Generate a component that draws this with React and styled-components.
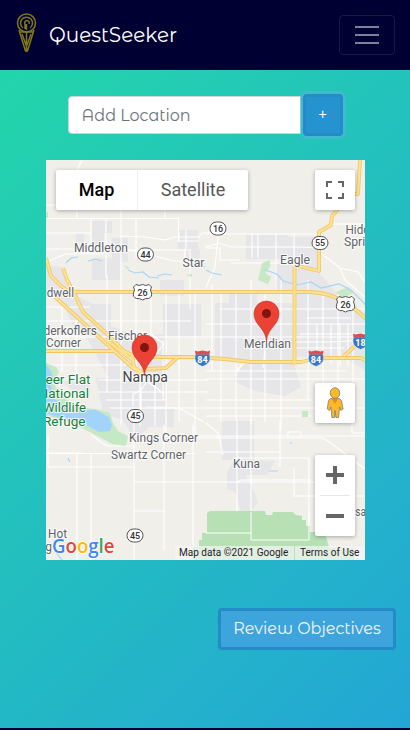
import React from 'react';
import styled, { createGlobalStyle } from 'styled-components';

const GlobalStyle = createGlobalStyle`
  * { box-sizing: border-box; }
  html, body { margin: 0; padding: 0; }
  body { background: #003; overflow: hidden; font-family: 'Montserrat Alternates', Montserrat, Lato, sans-serif; }
  button, input { font: inherit; }
`;

const Page = styled.div`
  height: 730px;
  display: flex;
  flex-direction: column;
  background: #003;
`;

const Navbar = styled.header`
  height: 70px;
  flex: none;
  display: flex;
  align-items: center;
  justify-content: space-between;
  padding: 0 15px 0 16px;
  background: #003;
`;

const Brand = styled.a`
  display: flex;
  align-items: center;
  gap: 12px;
  color: #fff;
  font-size: 20px;
  line-height: 30px;
`;

const Emblem = styled.svg`
  width: 21px;
  height: 44px;
  margin-bottom: 4px;
`;

const Toggler = styled.button`
  width: 56px;
  height: 40px;
  padding: 0;
  display: flex;
  flex-direction: column;
  justify-content: center;
  align-items: center;
  gap: 6px;
  background: transparent;
  border: 1px solid rgba(255, 255, 255, 0.1);
  border-radius: 4px;
`;

const TogglerBar = styled.span`
  width: 24px;
  height: 2px;
  background: rgba(255, 255, 255, 0.5);
`;

const Main = styled.main`
  height: 658px;
  flex: none;
  display: flex;
  flex-direction: column;
  align-items: center;
  padding-top: 24px;
  background: linear-gradient(135deg, #23d5ab, #23a6d5);
`;

const SearchRow = styled.form`
  display: flex;
  align-items: center;
  gap: 2px;
  height: 42px;
  width: 275px;
  margin-bottom: 24px;
`;

const Field = styled.input`
  width: 233px;
  height: 38px;
  padding: 6px 13px;
  font-size: 16px;
  line-height: 24px;
  background: #fff;
  border: 1px solid #ced4da;
  border-radius: 4px 0 0 4px;
  &::placeholder {
    color: #6c757d;
    opacity: 1;
  }
`;

const Button = styled.button`
  height: 42px;
  width: ${(p) => p.$width}px;
  padding: 0;
  display: flex;
  align-items: center;
  justify-content: center;
  font-size: 16px;
  line-height: 24px;
  white-space: nowrap;
  color: ${(p) => (p.$focused ? '#fff' : '#f1f6fb')};
  background: ${(p) => (p.$focused ? '#2593cf' : '#3da4dc')};
  border: 3px solid #238bc5;
  border-radius: 4px;
  box-shadow: ${(p) => (p.$focused ? '0 0 0 3px rgba(90, 178, 225, 0.5)' : 'none')};
`;

const ReviewRow = styled.div`
  align-self: stretch;
  display: flex;
  justify-content: flex-end;
  padding: 48px 14px 0 0;
`;

const MapFrame = styled.section`
  position: relative;
  width: 319px;
  height: 400px;
  flex: none;
  overflow: hidden;
  font-family: Roboto, sans-serif;
`;

const MapDrawing = styled.svg`
  display: block;
  width: 319px;
  height: 400px;
`;

const Control = styled.div`
  position: absolute;
  background: #fff;
  border-radius: 2px;
  box-shadow: 0 1px 4px rgba(0, 0, 0, 0.3);
  display: flex;
  align-items: center;
  justify-content: center;
`;

const MapTypes = styled(Control)`
  left: 10px;
  top: 10px;
  width: 192px;
  height: 40px;
`;

const MapType = styled.span`
  width: ${(p) => p.$width}px;
  padding-left: 1px;
  line-height: 40px;
  text-align: center;
  font-size: 18px;
  font-weight: ${(p) => (p.$active ? 500 : 400)};
  color: ${(p) => (p.$active ? '#000' : '#565656')};
  border-left: ${(p) => (p.$active ? 'none' : '1px solid #eee')};
`;

const SideControl = styled(Control)`
  right: 10px;
  top: ${(p) => p.$top}px;
  width: 40px;
  height: 40px;
`;

const ZoomControl = styled(SideControl)`
  height: 81px;
  flex-direction: column;
`;

const ZoomCell = styled.div`
  width: 40px;
  height: 40px;
  display: flex;
  align-items: center;
  justify-content: center;
`;

const ZoomRule = styled.div`
  width: 30px;
  height: 1px;
  background: #e6e6e6;
`;

const Credits = styled.div`
  position: absolute;
  right: 0;
  bottom: 0;
  height: 14px;
  display: flex;
`;

const Credit = styled.span`
  width: ${(p) => p.$width}px;
  padding-left: ${(p) => p.$inset}px;
  font-size: 10px;
  line-height: 14px;
  letter-spacing: 0.02px;
  white-space: nowrap;
  color: #222;
  background: rgba(245, 245, 245, 0.7);
  margin-left: 1px;
`;

const urbanAreas = [
  'M92 221h20v12h-8v14h-12z M76 233h8v9h-8z M112 238h16v24h-16z M92 258h28v22H92z',
  'M46 265l15 2 12 27 20 10h18v22l25 10 30-2v46l-30 8-22-4-10-14-16-30-16-16-10-24-16-8z',
  'M160 280h24v16h-24z M163 304h38v32h-38z M178 230h20v19h-20z M186 249h14v9h-14z',
  'M246 235h42v24h-42z M288 237h31v29h-31z M275 262h42v30h-42z M295 277l24-4 16 18 30 22v58l-20-14h-50z',
  'M215 303h78v58h-78z M229 293h28v12h-28z M298 294h36l31 26v35h-67z M245 361h48l8 26-16 9-30-5-22-10z',
  'M62 381h28v15h-12z M96 378h70v28h-20l4 20-15 14-12-20-20-6z M145 409h29v18h-29z',
  'M222 421h32v39h-32z M235 459l40 2-8 14h-22l10 18 3 10-8 9h-9l-6-20-8-3v-17z',
];

const minorRoads = [
  'M46 205h31v13M77 213v5M82 160l-5 10M46 218.5h132.500V242M91 218v30M91 233H46M106 218v60M121 210v130M136 218v40M77 210v8M46 249h45M46 262l20-8h38M121 236l24 1 20 3 10-3h24l3-4h18',
  'M104 248l30 3 40 10h10l2-15v-16M179 233v8h20M190 249v60M165 210v8M121 250h68M46 307h44M46 321h145M46 337h319M62 302v70M76 320v60M107 275v117M121 289v136M136 292v80M151 292v60M166 292v140M179 292v130M195 292v150M46 365h80M98 380h110M98 392h110M120 436h245M46 453.500h150M110 408h255',
  'M218 237v-8M206 247l13-4 12 4h67l25 1M218 237l-3 30-9 20M206 234h113M231 263h62l13 2M252 234v24M258 234v24M276 234v58M294 234v31M206 248h14v12h20M219 309h146M206 324h159M206 371h140M206 379h160M206 400h105M206 416h105M212 284v86M221 292v130M236 292v128M251 280v145M265 292v130M281 280v150M308 280v120M323 292v108M338 294v108M353 302v80M331 224h34M319 252l11 8 10 8 18 4 7 10M340 268l5 12 20 17',
  'M296 342h34l35-2M300 334h65M317 324v42M331 324v40M340 324v42M348 324v42M307 318h44M296 348h48M265 350l-2 18M240 370h-3l8-8M151 334l13 10-8 10',
  'M48 435v32h86M48 453h34M77 453v112M77 465v100h57M91 453v112M134 420v140M164 425v126M134 482h215M134 511h30M193 425v120M193 438h130l9 6 33 25M237 420v120M251 420v127M251 540h58v-82h-75M294 467v29h71M309 460v80M288 438v-6h13v6M280 420v47M251 438h42M206 452h74M206 423l12 10 5 22M352 420v13h13M206 533h45M237 482l4-2h70',
  'M137 370l4 19M148 380l-7 10-8 4v12M141 390v20M155 380v46M106 400h60M146 381l12 8 6 6M155 408h24l25 14M163 340v60M140 376v50M91 435l16 11h28',
];

const highways = [
  'M46 258l5 18 9 9 17 13M63 268l4 12 9 17 7 15 23 21 18 18 10 5 25 1h37l28 2 27 3h50l17-4h43l27 15',
  'M55 297l78 71 9 6M132 355l2 12 9 6M146 369l20-1 12-11M105 339l29 22',
  'M70 292h239c20 0 40 10 57 27M46 351h67M294.500 267v98M294 265l25 6v-39l12-7 1-9 6-7 8-15h12l2-34M344 356l12-11',
];

const labels = [
  { t: 'Middleton', x: 74, y: 252, w: 54 },
  { t: 'Star', x: 182.500, y: 267, w: 22 },
  { t: 'Eagle', x: 280, y: 264, w: 30 },
  { t: 'Hidden', x: 345.500, y: 234, w: 37 },
  { t: 'Springs', x: 344, y: 246, w: 41 },
  { t: 'Caldwell', x: 30, y: 297, w: 44 },
  { t: 'Vanderkoflers', x: 23, y: 335, w: 74 },
  { t: 'Corner', x: 46, y: 347, w: 35 },
  { t: 'Fischer', x: 108, y: 340, w: 39 },
  { t: 'Nampa', x: 122.500, y: 382, w: 45.500, s: 14, c: '#444' },
  { t: 'Meridian', x: 244, y: 348, w: 47, s: 12 },
  { t: 'Deer Flat', x: 36.500, y: 384, w: 54, s: 13, c: '#188038' },
  { t: 'National', x: 38.500, y: 398, w: 50.500, s: 13, c: '#188038' },
  { t: 'Wildlife', x: 43, y: 412, w: 43, s: 13, c: '#188038' },
  { t: 'Refuge', x: 43, y: 426, w: 42.500, s: 13, c: '#188038' },
  { t: 'Kings Corner', x: 129, y: 442, w: 69 },
  { t: 'Swartz Corner', x: 111, y: 459, w: 75 },
  { t: 'Kuna', x: 233, y: 468, w: 27 },
  { t: 'Hot', x: 48, y: 538, w: 19 },
  { t: 'Spring', x: 18, y: 551, w: 34 },
  { t: 'Mesa', x: 341, y: 516, w: 25 },
];

const OvalShield = ({ x, y, n }) => (
  <g>
    <rect x={x - 8} y={y - 6.500} width="16" height="13" rx="6.500" fill="#fff" stroke="#555" strokeWidth="1" />
    <text x={x} y={y + 3.300} fontSize="9" fontWeight="500" textAnchor="middle" fill="#333">{n}</text>
  </g>
);

const UsShield = ({ x, y, n }) => (
  <g transform={`translate(${x} ${y})`}>
    <path d="M-6.500-7.500Q-3.500-5.500 0-7.500Q3.500-5.500 6.500-7.500L9-5Q7-2 9 1Q10 5 6 6.500Q3 6 0 8Q-3 6-6 6.500Q-10 5-9 1Q-7-2-9-5Z" fill="#fff" stroke="#555" />
    <text y="3.500" fontSize="9" fontWeight="500" textAnchor="middle" fill="#333">{n}</text>
  </g>
);

const Interstate = ({ x, y, n }) => (
  <g transform={`translate(${x} ${y})`}>
    <path d="M-7-4H7Q10 5 0 8.500Q-10 5-7-4Z" fill="#3976c5" stroke="#fff" strokeWidth=".5" />
    <path d="M-7.500-7.500L-5-6.500 0-7.500 5-6.500 7.500-7.500 7-3.500H-7Z" fill="#d94f4b" />
    <text y="4.500" fontSize="9" fontWeight="700" textAnchor="middle" fill="#fff">{n}</text>
  </g>
);

const Pin = ({ x, y }) => (
  <g transform={`translate(${x} ${y})`}>
    <path d="M0 0C-1-14-12.500-16-12.500-28A12.500 12.500 0 0 1 12.500-28C12.500-16 1-14 0 0Z" fill="#ea4335" stroke="#c5221f" strokeWidth=".5" />
    <circle cy="-28" r="4.500" fill="#811411" />
  </g>
);

const googleLetters = [['G', '#4285f4'], ['o', '#ea4335'], ['o', '#fbbc04'], ['g', '#4285f4'], ['l', '#34a853'], ['e', '#ea4335']];

const MapCanvas = () => (
  <MapDrawing viewBox="46 160 319 400" fontFamily="Roboto, sans-serif">
    <rect x="46" y="160" width="319" height="400" fill="#f0efea" />
    <g fill="#e6e6e8">{urbanAreas.map((d) => <path key={d} d={d} />)}</g>
    <g fill="none" stroke="#fff" strokeWidth="1.100">{minorRoads.map((d) => <path key={d} d={d} />)}</g>
    <g fill="#c5e8c5">
      <path d="M46 363l10 4 3 5-6 10 8 14 12 8 13 4 10 1 14 4 3 10 5 8 10 5-2 10-14-2-24-13-18-9-24-6z" />
      <path d="M46 212h2v6h-2z M262 263l8-3v7l-5 6 6 4-3 7-10-4z M124 265l6 3-3 1z M186 275l6-1v3z M302 411h6v6h-6z M336 292l12-5 5 6-10 5z" />
    </g>
    <path d="M207 552v-39l3-2h55l1 4h6l1-3h20l3 3 6 1v4h4v6h4v6h15l4 16h25v12H193v-13h6v-7h3v-7h5z" fill="#b7e1b5" />
    <path d="M251 512v28h58v-29M206 533h45" fill="none" stroke="#fff" />
    <path d="M46 365l5 6 2 7-2 10 4 11 12 9 14 2h15l13 7 3 8-2 6-11 1-17-9-20-4-16-6z" fill="#a2d4fb" />
    <g fill="none" stroke="#a8d5f5" strokeWidth="1.200">
      <path d="M66 263l5-5 7-1M88 261l8-2 6 2M128 270l7 3 8-1 6 5 10 1M157 276l8-2 7 1M195 265l10 2M206 270l6 3 10 2M265 270l12 4 6 7 14 4 14-3 10 6 18-4 12 6 12 12 8 10M55 551l7 9" />
      <path d="M68 458l2 4M269 471h9M291 442v2" />
    </g>
    <g fill="none" strokeLinejoin="round">
      {highways.map((d) => <path key={d} d={d} stroke="#f2c666" strokeWidth="3.800" />)}
      {highways.map((d) => <path key={d} d={d} stroke="#fde293" strokeWidth="2.200" />)}
    </g>
    <OvalShield x={218} y={228.500} n="16" />
    <OvalShield x={145.500} y={254.500} n="44" />
    <OvalShield x={320} y={243} n="55" />
    <OvalShield x={135.500} y={416} n="45" />
    <OvalShield x={135} y={535.500} n="45" />
    <UsShield x={142.500} y={292} n="26" />
    <UsShield x={345.500} y={304} n="26" />
    <Interstate x={202.500} y={358} n="84" />
    <Interstate x={316} y={358} n="84" />
    <Interstate x={360.500} y={341} n="18" />
    {labels.map(({ t, x, y, w, s = 12, c = '#5f6368' }) => (
      <text key={t} x={x} y={y} fontSize={s} fill={c} stroke="#fff" strokeWidth="2" strokeOpacity=".8" paintOrder="stroke" textLength={w} lengthAdjust="spacingAndGlyphs">{t}</text>
    ))}
    <Pin x={144.500} y={375.500} />
    <Pin x={266.500} y={341.500} />
    <text x="52" y="553" fontSize="19.500" fontFamily="'Open Sans', sans-serif" fontWeight="600" stroke="#fff" strokeWidth="1.500" paintOrder="stroke" textLength="62.500" lengthAdjust="spacingAndGlyphs">
      {googleLetters.map(([letter, fill], i) => <tspan key={i} fill={fill}>{letter}</tspan>)}
    </text>
  </MapDrawing>
);

const Pegman = () => (
  <svg width="18" height="32" viewBox="0 0 20 32" preserveAspectRatio="none">
    <path d="M5.500 11.500Q3 12 2.500 15L1.500 22 4 23.500 5.500 20 6.500 30.500H9.500L10 23.500 11 30.500H14L15 20 16.500 23.500 19 22 17.500 15Q17 12 14.500 11.500Z" fill="#fbb829" stroke="#777" strokeWidth=".8" />
    <path d="M6.500 11.500h7L10 17z" fill="#e78b23" />
    <circle cx="10" cy="6" r="5.300" fill="#fbb829" stroke="#777" strokeWidth=".8" />
  </svg>
);

export default function App() {
  return (
    <>
      <GlobalStyle />
      <Page>
        <Navbar>
          <Brand>
            <Emblem viewBox="0 0 21 44" fill="none" stroke="#817817" strokeWidth="1.500">
              <circle cx="10.500" cy="12" r="9" />
              <path d="M7 17A6 6 0 1 1 14 17M9 18v-5a2.300 2.300 0 1 1 4 0M10.500 13v6M3 19L9.500 40h2L18 19M4 21h13M6 23l4 11 1 0 4-11M10.500 21v19" />
            </Emblem>
            QuestSeeker
          </Brand>
          <Toggler aria-label="Toggle navigation"><TogglerBar /><TogglerBar /><TogglerBar /></Toggler>
        </Navbar>
        <Main>
          <SearchRow>
            <Field placeholder="Add Location" />
            <Button type="button" $width={40} $focused>+</Button>
          </SearchRow>
          <MapFrame>
            <MapCanvas />
            <MapTypes>
              <MapType $width={81} $active>Map</MapType>
              <MapType $width={111}>Satellite</MapType>
            </MapTypes>
            <SideControl $top={10}>
              <svg width="18" height="18" viewBox="0 0 18 18" fill="none" stroke="#666" strokeWidth="2"><path d="M1 6V1h5M12 1h5v5M17 12v5h-5M6 17H1v-5" /></svg>
            </SideControl>
            <SideControl $top={223}><Pegman /></SideControl>
            <ZoomControl $top={295}>
              <ZoomCell><svg width="18" height="18" stroke="#666" strokeWidth="4"><path d="M0 9h18M9 0v18" /></svg></ZoomCell>
              <ZoomRule />
              <ZoomCell><svg width="18" height="18" stroke="#666" strokeWidth="4"><path d="M0 9h18" /></svg></ZoomCell>
            </ZoomControl>
            <Credits>
              <Credit $width={119} $inset={4.5}>Map data ©2021 Google</Credit>
              <Credit $width={70} $inset={5.5}>Terms of Use</Credit>
            </Credits>
          </MapFrame>
          <ReviewRow>
            <Button type="button" $width={178}>Review Objectives</Button>
          </ReviewRow>
        </Main>
      </Page>
    </>
  );
}
